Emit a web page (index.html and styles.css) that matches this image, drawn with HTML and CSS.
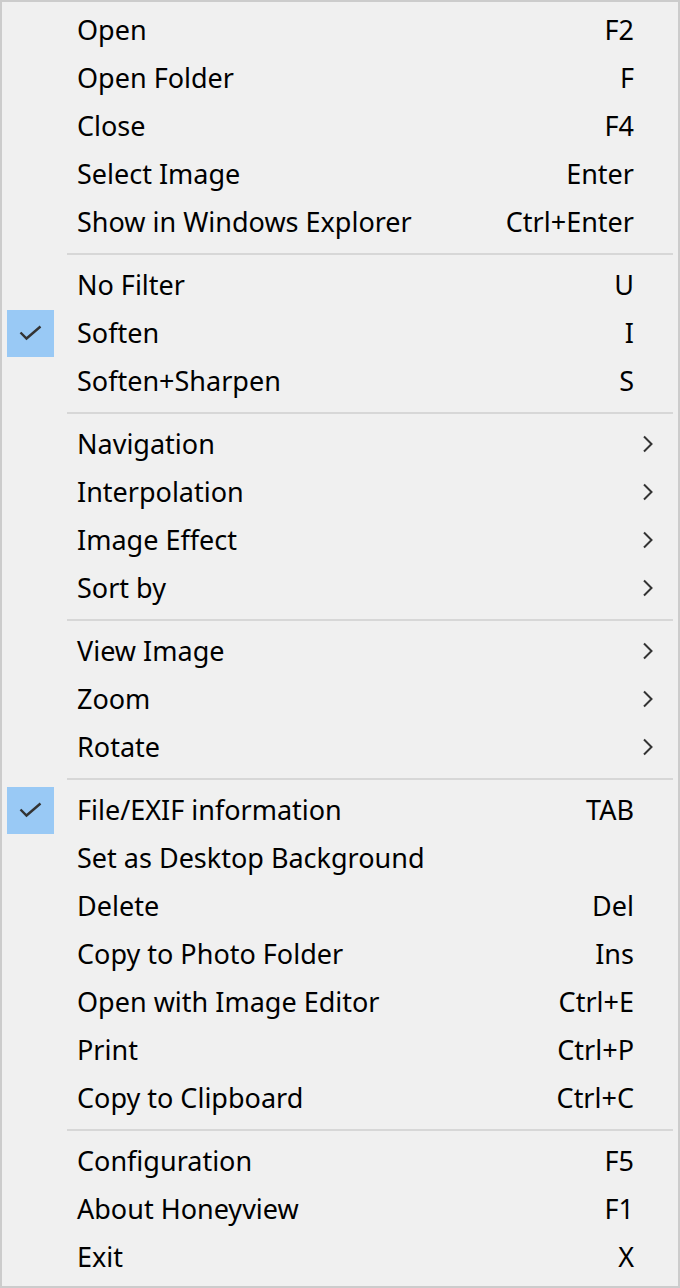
FILE: index.html
```html
<!DOCTYPE html>
<html lang="en">
<head>
  <meta charset="UTF-8">
  <title>Context Menu</title>
  <link rel="stylesheet" href="styles.css">
</head>
<body>
  <div class="menu">
    <div class="item"><span class="icon"></span><span class="label">Open</span><span class="key">F2</span><span class="sub"></span></div>
    <div class="item"><span class="icon"></span><span class="label">Open Folder</span><span class="key">F</span><span class="sub"></span></div>
    <div class="item"><span class="icon"></span><span class="label">Close</span><span class="key">F4</span><span class="sub"></span></div>
    <div class="item"><span class="icon"></span><span class="label">Select Image</span><span class="key">Enter</span><span class="sub"></span></div>
    <div class="item"><span class="icon"></span><span class="label">Show in Windows Explorer</span><span class="key">Ctrl+Enter</span><span class="sub"></span></div>
    <div class="sep"></div>

    <div class="item"><span class="icon"></span><span class="label">No Filter</span><span class="key">U</span><span class="sub"></span></div>
    <div class="item"><span class="icon checked"><svg width="24" height="16" viewBox="0 0 24 16"><path d="M1.5 7.5 L7.5 13.5 L21.5 1.5" fill="none" stroke="#333" stroke-width="2.4"/></svg></span><span class="label">Soften</span><span class="key">I</span><span class="sub"></span></div>
    <div class="item"><span class="icon"></span><span class="label">Soften+Sharpen</span><span class="key">S</span><span class="sub"></span></div>
    <div class="sep"></div>

    <div class="item"><span class="icon"></span><span class="label">Navigation</span><span class="key"></span><span class="sub"><svg width="12" height="18" viewBox="0 0 12 18"><path d="M2 1.5 L9.5 9 L2 16.5" fill="none" stroke="#333" stroke-width="2"/></svg></span></div>
    <div class="item"><span class="icon"></span><span class="label">Interpolation</span><span class="key"></span><span class="sub"><svg width="12" height="18" viewBox="0 0 12 18"><path d="M2 1.5 L9.5 9 L2 16.5" fill="none" stroke="#333" stroke-width="2"/></svg></span></div>
    <div class="item"><span class="icon"></span><span class="label">Image Effect</span><span class="key"></span><span class="sub"><svg width="12" height="18" viewBox="0 0 12 18"><path d="M2 1.5 L9.5 9 L2 16.5" fill="none" stroke="#333" stroke-width="2"/></svg></span></div>
    <div class="item"><span class="icon"></span><span class="label">Sort by</span><span class="key"></span><span class="sub"><svg width="12" height="18" viewBox="0 0 12 18"><path d="M2 1.5 L9.5 9 L2 16.5" fill="none" stroke="#333" stroke-width="2"/></svg></span></div>
    <div class="sep"></div>

    <div class="item"><span class="icon"></span><span class="label">View Image</span><span class="key"></span><span class="sub"><svg width="12" height="18" viewBox="0 0 12 18"><path d="M2 1.5 L9.5 9 L2 16.5" fill="none" stroke="#333" stroke-width="2"/></svg></span></div>
    <div class="item"><span class="icon"></span><span class="label">Zoom</span><span class="key"></span><span class="sub"><svg width="12" height="18" viewBox="0 0 12 18"><path d="M2 1.5 L9.5 9 L2 16.5" fill="none" stroke="#333" stroke-width="2"/></svg></span></div>
    <div class="item"><span class="icon"></span><span class="label">Rotate</span><span class="key"></span><span class="sub"><svg width="12" height="18" viewBox="0 0 12 18"><path d="M2 1.5 L9.5 9 L2 16.5" fill="none" stroke="#333" stroke-width="2"/></svg></span></div>
    <div class="sep"></div>

    <div class="item"><span class="icon checked"><svg width="24" height="16" viewBox="0 0 24 16"><path d="M1.5 7.5 L7.5 13.5 L21.5 1.5" fill="none" stroke="#333" stroke-width="2.4"/></svg></span><span class="label">File/EXIF information</span><span class="key">TAB</span><span class="sub"></span></div>
    <div class="item"><span class="icon"></span><span class="label">Set as Desktop Background</span><span class="key"></span><span class="sub"></span></div>
    <div class="item"><span class="icon"></span><span class="label">Delete</span><span class="key">Del</span><span class="sub"></span></div>
    <div class="item"><span class="icon"></span><span class="label">Copy to Photo Folder</span><span class="key">Ins</span><span class="sub"></span></div>
    <div class="item"><span class="icon"></span><span class="label">Open with Image Editor</span><span class="key">Ctrl+E</span><span class="sub"></span></div>
    <div class="item"><span class="icon"></span><span class="label">Print</span><span class="key">Ctrl+P</span><span class="sub"></span></div>
    <div class="item"><span class="icon"></span><span class="label">Copy to Clipboard</span><span class="key">Ctrl+C</span><span class="sub"></span></div>
    <div class="sep"></div>

    <div class="item"><span class="icon"></span><span class="label">Configuration</span><span class="key">F5</span><span class="sub"></span></div>
    <div class="item"><span class="icon"></span><span class="label">About Honeyview</span><span class="key">F1</span><span class="sub"></span></div>
    <div class="item"><span class="icon"></span><span class="label">Exit</span><span class="key">X</span><span class="sub"></span></div>
  </div>
</body>
</html>
```

FILE: styles.css
```css
html, body { margin: 0; padding: 0; background: #f0f0f0; }
body { font-family: "Noto Sans", "Open Sans", sans-serif; font-size: 27px; color: #000; }

.menu {
  box-sizing: border-box;
  width: 680px;
  height: 1288px;
  border: 2px solid #cccccc;
  padding: 4px 0 5px;
  background: #f0f0f0;
}

.item {
  display: grid;
  grid-template-columns: 75px 1fr auto 44px;
  align-items: center;
  height: 48px;
}

.icon {
  display: flex;
  align-items: center;
  justify-content: center;
  margin-left: 5px;
  width: 47px;
  height: 47px;
}
.icon.checked { background: #99c9f5; }

.label { white-space: nowrap; line-height: 1; padding-bottom: 2px; }
.key { white-space: nowrap; line-height: 1; padding-bottom: 2px; text-align: right; }

.sub { display: flex; align-items: center; padding-left: 8px; }
.sub svg { display: block; }

.sep {
  height: 2px;
  margin: 7px 5px 6px 65px;
  background: #d7d7d7;
}
```
